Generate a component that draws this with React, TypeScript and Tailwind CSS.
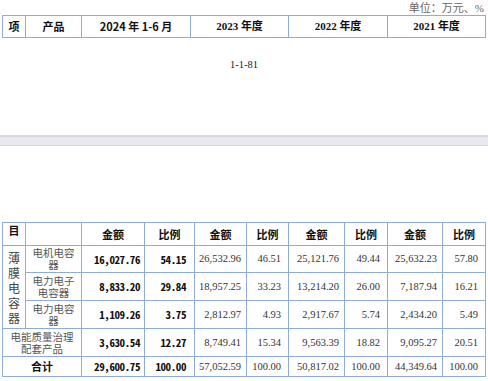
import React from "react";

const CJK = "font-['Noto_Sans_CJK_SC',sans-serif]";
const SERIF = "font-['Liberation_Serif','Noto_Sans_CJK_SC',serif]";
const MONO = "font-['Noto_Sans_Mono_CJK_SC','DejaVu_Sans_Mono',monospace]";

const bd = "border border-[#8fabd8]";

type Row = {
  a: string;
  b: string;
  c: string[];
};

const rows: Row[] = [
  { a: "16,027.76", b: "54.15", c: ["26,532.96", "46.51", "25,121.76", "49.44", "25,632.23", "57.80"] },
  { a: "8,833.20", b: "29.84", c: ["18,957.25", "33.23", "13,214.20", "26.00", "7,187.94", "16.21"] },
  { a: "1,109.26", b: "3.75", c: ["2,812.97", "4.93", "2,917.67", "5.74", "2,434.20", "5.49"] },
  { a: "3,630.54", b: "12.27", c: ["8,749.41", "15.34", "9,563.39", "18.82", "9,095.27", "20.51"] },
];

function Nums({ r }: { r: Row }) {
  return (
    <>
      <td className={`${bd} ${MONO} font-bold text-[11px] text-[#111] text-right pr-[4px] tracking-[-0.4px]`}>{r.a}</td>
      <td className={`${bd} ${MONO} font-bold text-[11px] text-[#111] text-right pr-[8px] tracking-[-0.4px]`}>{r.b}</td>
      {r.c.map((v, i) => (
        <td key={i} className={`${bd} ${SERIF} text-[10.5px] text-[#333] text-right ${i % 2 === 0 ? "pr-[5px]" : "pr-[7px]"}`}>
          {v}
        </td>
      ))}
    </>
  );
}

export default function App() {
  return (
    <div className="w-[488px] h-[381px] bg-white overflow-hidden relative">
      <div className={`h-[15px] pr-[4px] pt-[2px] text-right text-[11px] leading-[12px] text-[#666] ${SERIF}`}>
        单位：万元、%
      </div>
      <table className="ml-[2px] w-[483px] table-fixed border-collapse">
        <colgroup>
          <col className="w-[23px]" />
          <col className="w-[56px]" />
          <col className="w-[109px]" />
          <col className="w-[98px]" />
          <col className="w-[99px]" />
          <col className="w-[98px]" />
        </colgroup>
        <tbody>
          <tr className="h-[22px]">
            <td className={`${bd} ${CJK} font-bold text-[11px] text-center text-[#111]`}>项</td>
            <td className={`${bd} ${CJK} font-bold text-[11px] text-center text-[#111]`}>产品</td>
            <td className={`${bd} ${CJK} font-bold text-[11px] text-center text-[#111]`}>2024 年 1-6 月</td>
            <td className={`${bd} ${SERIF} font-bold text-[11px] text-center text-[#111]`}>2023 年度</td>
            <td className={`${bd} ${SERIF} font-bold text-[11px] text-center text-[#111]`}>2022 年度</td>
            <td className={`${bd} ${SERIF} font-bold text-[11px] text-center text-[#111]`}>2021 年度</td>
          </tr>
        </tbody>
      </table>
      <div className={`mt-[21px] text-center text-[10.5px] leading-[12px] text-[#222] ${SERIF}`}>1-1-81</div>
      <div className="mt-[64px] h-[11px] bg-[#e8e9f0] border-t-2 border-t-[#d8d8dd] border-b border-b-[#d8d8dd]" />
      <table className="mt-[76px] ml-[2px] w-[483px] table-fixed border-collapse">
        <colgroup>
          <col className="w-[23px]" />
          <col className="w-[56px]" />
          <col className="w-[63px]" />
          <col className="w-[50px]" />
          <col className="w-[52px]" />
          <col className="w-[42px]" />
          <col className="w-[56px]" />
          <col className="w-[43px]" />
          <col className="w-[55px]" />
          <col className="w-[43px]" />
        </colgroup>
        <tbody>
          <tr className="h-[23px]">
            <td className={`${bd} ${CJK} font-bold text-[11px] text-center align-top leading-[14px] text-[#111]`}>目</td>
            <td className={bd}></td>
            {["金额", "比例", "金额", "比例", "金额", "比例", "金额", "比例"].map((h, i) => (
              <td key={i} className={`${bd} ${CJK} font-bold text-[11px] text-center text-[#111]`}>
                {h}
              </td>
            ))}
          </tr>
          <tr className="h-[27px]">
            <td rowSpan={3} className={`${bd} ${CJK} text-[12px] leading-[15px] text-center text-[#444] align-middle`}>
              薄<br />膜<br />电<br />容<br />器
            </td>
            <td className={`${bd} ${CJK} text-[10.5px] leading-[12px] text-center text-[#555]`}>
              电机电容<br />器
            </td>
            <Nums r={rows[0]} />
          </tr>
          <tr className="h-[28px]">
            <td className={`${bd} ${CJK} text-[10.5px] leading-[12px] text-center text-[#555]`}>
              电力电子<br />电容器
            </td>
            <Nums r={rows[1]} />
          </tr>
          <tr className="h-[28px]">
            <td className={`${bd} ${CJK} text-[10.5px] leading-[12px] text-center text-[#555]`}>
              电力电容<br />器
            </td>
            <Nums r={rows[2]} />
          </tr>
          <tr className="h-[28px]">
            <td colSpan={2} className={`${bd} ${CJK} text-[10.5px] leading-[12px] text-center text-[#555]`}>
              电能质量治理<br />配套产品
            </td>
            <Nums r={rows[3]} />
          </tr>
          <tr className="h-[20px]">
            <td colSpan={2} className={`${bd} ${CJK} font-bold text-[11px] text-center text-[#111]`}>合计</td>
            <Nums r={{ a: "29,600.75", b: "100.00", c: ["57,052.59", "100.00", "50,817.02", "100.00", "44,349.64", "100.00"] }} />
          </tr>
        </tbody>
      </table>
    </div>
  );
}
